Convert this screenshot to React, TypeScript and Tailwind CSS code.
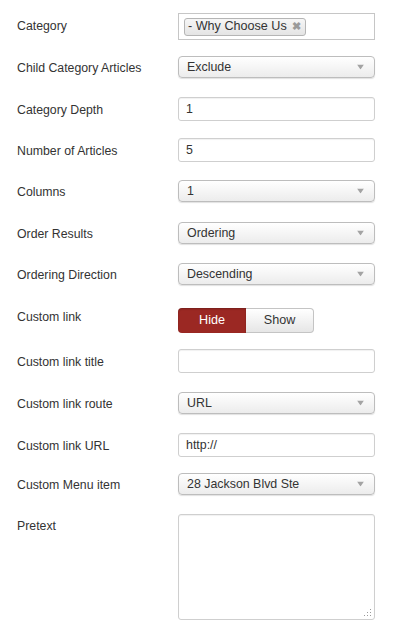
import React from "react";

const font = { fontFamily: '"Liberation Sans", Arial, sans-serif' };

const Arrow = () => (
  <svg width="7" height="5" viewBox="0 0 7 5" className="absolute right-[10px] top-1/2 -translate-y-1/2">
    <path d="M0 0 L7 0 L3.5 5 Z" fill="#a3a3a3" />
  </svg>
);

const Select = ({ value }: { value: string }) => (
  <div className="relative flex h-[22px] w-[197px] items-center rounded-[4px] border border-[#bdbdbd] bg-gradient-to-b from-white to-[#ececec] pl-[8px] text-[12.4px] text-[#333] shadow-[0_1px_1px_rgba(0,0,0,0.12)]">
    {value}
    <Arrow />
  </div>
);

const Input = ({ value = "" }: { value?: string }) => (
  <div className="flex h-[24px] w-[197px] items-center rounded-[3px] border border-[#cfcfcf] bg-white pl-[7px] text-[12.4px] text-[#333] shadow-[inset_0_1px_1px_rgba(0,0,0,0.06)]">
    {value}
  </div>
);

const Row = ({
  label,
  mt,
  pt = "pt-[2px]",
  top = false,
  children,
}: {
  label: string;
  mt: string;
  pt?: string;
  top?: boolean;
  children: React.ReactNode;
}) => (
  <div className={`flex ${top ? "items-start" : "items-center"} ${mt}`}>
    <div className={`w-[161px] shrink-0 text-[12.3px] text-[#333] ${pt}`}>{label}</div>
    {children}
  </div>
);

export default function App() {
  return (
    <div className="h-[633px] w-[417px] bg-white pl-[17px]" style={font}>
      <div className="h-[13px]" />
      <Row label="Category" mt="mt-0" pt="pt-0">
        <div className="flex h-[27px] w-[197px] items-center border border-[#c6c6c6] bg-white pl-[5px]">
          <div className="flex h-[18px] items-center gap-[5px] rounded-[3px] border border-[#b5b5b5] bg-gradient-to-b from-[#f6f6f6] to-[#e4e4e4] pl-[3px] pr-[4px] text-[12.6px] text-[#333]">
            - Why Choose Us
            <span className="text-[11px] font-bold leading-none text-[#9a9a9a]">✖</span>
          </div>
        </div>
      </Row>
      <Row label="Child Category Articles" mt="mt-[16px]">
        <Select value="Exclude" />
      </Row>
      <Row label="Category Depth" mt="mt-[19px]">
        <Input value="1" />
      </Row>
      <Row label="Number of Articles" mt="mt-[17px]">
        <Input value="5" />
      </Row>
      <Row label="Columns" mt="mt-[18px]">
        <Select value="1" />
      </Row>
      <Row label="Order Results" mt="mt-[20px]">
        <Select value="Ordering" />
      </Row>
      <Row label="Ordering Direction" mt="mt-[19px]">
        <Select value="Descending" />
      </Row>
      <Row label="Custom link" mt="mt-[23px]" pt="pt-0" top>
        <div className="flex h-[25px] text-[12.6px]">
          <div className="flex w-[68px] items-center justify-center rounded-l-[4px] bg-[#9b2823] text-white shadow-[inset_0_1px_2px_rgba(0,0,0,0.25)]">
            Hide
          </div>
          <div className="flex w-[68px] items-center justify-center rounded-r-[4px] border border-l-0 border-[#c4c4c4] bg-gradient-to-b from-white to-[#e6e6e6] text-[#333]">
            Show
          </div>
        </div>
      </Row>
      <Row label="Custom link title" mt="mt-[16px]">
        <Input />
      </Row>
      <Row label="Custom link route" mt="mt-[19px]">
        <Select value="URL" />
      </Row>
      <Row label="Custom link URL" mt="mt-[19px]">
        <Input value="http://" />
      </Row>
      <Row label="Custom Menu item" mt="mt-[16px]">
        <Select value="28 Jackson Blvd Ste" />
      </Row>
      <Row label="Pretext" mt="mt-[19px]" pt="pt-[3px]" top>
        <div className="relative h-[106px] w-[197px] rounded-[3px] border border-[#cfcfcf] bg-white shadow-[inset_0_1px_1px_rgba(0,0,0,0.06)]">
          <svg width="8" height="8" viewBox="0 0 8 8" className="absolute bottom-[2px] right-[2px]">
            <g fill="#9a9a9a">
              <rect x="6" y="0" width="1" height="1" />
              <rect x="3" y="3" width="1" height="1" />
              <rect x="6" y="3" width="1" height="1" />
              <rect x="0" y="6" width="1" height="1" />
              <rect x="3" y="6" width="1" height="1" />
              <rect x="6" y="6" width="1" height="1" />
            </g>
          </svg>
        </div>
      </Row>
    </div>
  );
}
